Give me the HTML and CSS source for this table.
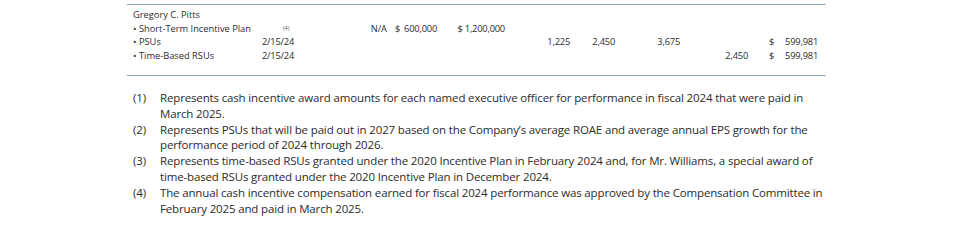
FILE: index.html
```html
<!DOCTYPE html>
<html>
<head>
<meta charset="utf-8">
<link rel="stylesheet" href="styles.css">
</head>
<body>
<div class="table">
  <div class="row">
    <div class="c label">Gregory C. Pitts</div>
  </div>
  <div class="row">
    <div class="c label">• Short-Term Incentive Plan</div>
    <div class="c date"><sup class="note">(4)</sup></div>
    <div class="c n3">N/A</div>
    <div class="c n4"><span class="cur">$</span><span>600,000</span></div>
    <div class="c n5">$ 1,200,000</div>
  </div>
  <div class="row">
    <div class="c label">• PSUs</div>
    <div class="c date">2/15/24</div>
    <div class="c n6">1,225</div>
    <div class="c n7">2,450</div>
    <div class="c n8">3,675</div>
    <div class="c n10"><span class="cur">$</span><span>599,981</span></div>
  </div>
  <div class="row">
    <div class="c label">• Time-Based RSUs</div>
    <div class="c date">2/15/24</div>
    <div class="c n9">2,450</div>
    <div class="c n10"><span class="cur">$</span><span>599,981</span></div>
  </div>
</div>
<div class="notes">
  <div class="fn"><span class="num">(1)</span><p>Represents cash incentive award amounts for each named executive officer for performance in fiscal 2024 that were paid in March 2025.</p></div>
  <div class="fn"><span class="num">(2)</span><p>Represents PSUs that will be paid out in 2027 based on the Company’s average ROAE and average annual EPS growth for the performance period of 2024 through 2026.</p></div>
  <div class="fn"><span class="num">(3)</span><p>Represents time-based RSUs granted under the 2020 Incentive Plan in February 2024 and, for Mr. Williams, a special award of time-based RSUs granted under the 2020 Incentive Plan in December 2024.</p></div>
  <div class="fn"><span class="num">(4)</span><p>The annual cash incentive compensation earned for fiscal 2024 performance was approved by the Compensation Committee in February 2025 and paid in March 2025.</p></div>
</div>
</body>
</html>
```
FILE: styles.css
```css
html, body {
  margin: 0;
  padding: 0;
  background: #ffffff;
}
body {
  font-family: "Open Sans", "Noto Sans", sans-serif;
  color: #2b2b2b;
}
.table {
  margin: 4px 0 0 127px;
  width: 685px;
  padding: 3px 8px 12px 6px;
  border-top: 1px solid #8ea4c6;
  border-bottom: 1px solid #8ea4c6;
  font-size: 9.3px;
}
.row {
  display: grid;
  grid-template-columns: 122px 45px 87px 50px 68px 65px 45px 65px 68px 70px;
  line-height: 13.7px;
  height: 13.7px;
  white-space: nowrap;
}
.label { grid-column: 1; }
.date { grid-column: 2; padding-left: 7px; letter-spacing: -0.2px; }
.note {
  font-size: 5.5px;
  letter-spacing: 0;
  vertical-align: 3px;
  padding-left: 21px;
  color: #555555;
}
.n3 { grid-column: 3; text-align: right; }
.n4 { grid-column: 4; display: flex; justify-content: space-between; padding-left: 8px; letter-spacing: -0.2px; }
.n5 { grid-column: 5; text-align: right; letter-spacing: -0.2px; }
.n6 { grid-column: 6; text-align: right; letter-spacing: -0.2px; }
.n7 { grid-column: 7; text-align: right; letter-spacing: -0.2px; }
.n8 { grid-column: 8; text-align: right; letter-spacing: -0.2px; }
.n9 { grid-column: 9; text-align: right; letter-spacing: -0.2px; }
.n10 { grid-column: 10; display: flex; justify-content: space-between; padding-left: 21px; letter-spacing: -0.2px; }
.notes {
  margin: 14px 0 0 133px;
  width: 693px;
  font-size: 11.5px;
  letter-spacing: -0.15px;
  line-height: 15.9px;
}
.fn {
  display: flex;
}
.num {
  flex: 0 0 27px;
}
.fn p {
  margin: 0;
  flex: 1;
}
```
